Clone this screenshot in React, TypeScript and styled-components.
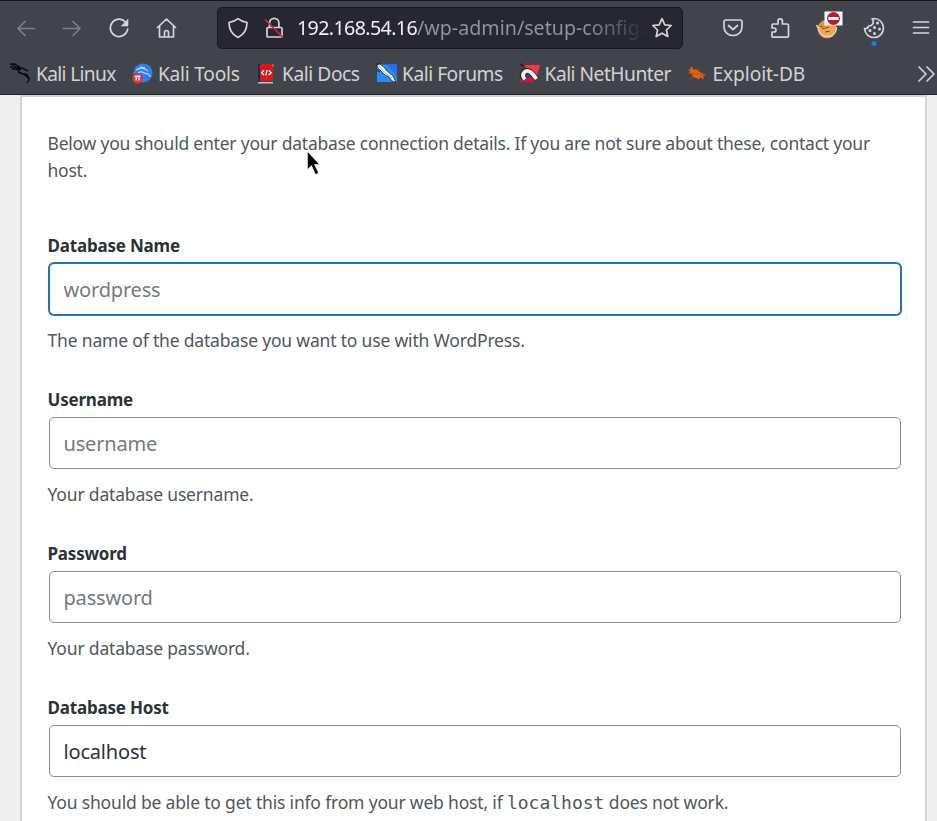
import React from 'react';
import styled, { createGlobalStyle } from 'styled-components';

const GlobalStyle = createGlobalStyle`
  * { box-sizing: border-box; }
  html, body { margin: 0; padding: 0; overflow: hidden; }
  body { background: #efefef; font-family: "Noto Sans", "Open Sans", sans-serif; }
`;

const Window = styled.div`
  position: relative;
  display: flex;
  flex-direction: column;
  width: 937px;
  height: 821px;
  overflow: hidden;
  background: #efefef;
`;

const Chrome = styled.header`
  flex: none;
  height: 95px;
  background: #42444c;
  border-top: 1px solid #15171c;
  border-bottom: 1px solid #24252b;
`;

const NavBar = styled.div`
  display: flex;
  align-items: center;
  height: 53px;
`;

const NavGroup = styled.div`
  display: flex;
  align-items: center;
  width: 217px;
  padding-left: 13.5px;
  gap: 22.7px;
`;

const IconButton = styled.button<{ $dim?: boolean }>`
  display: flex;
  flex: none;
  width: 24px;
  height: 24px;
  padding: 0;
  border: 0;
  background: none;
  color: ${(p) => (p.$dim ? '#7f8086' : '#d6d6d9')};
`;

const AddressBar = styled.div`
  display: flex;
  align-items: center;
  width: 466px;
  height: 42px;
  padding: 0 8px;
  color: #d6d6d9;
  background: #262732;
  border: 1px solid #17181d;
  border-radius: 5px;
`;

const Url = styled.div`
  flex: none;
  width: 348px;
  margin: 1px -7px 0 11px;
  white-space: nowrap;
  font-size: 19.6px;
  line-height: 30px;
  letter-spacing: 0.03px;
  color: #92939a;
  mask-image: linear-gradient(to right, #000 290px, transparent 350px);
`;

const Host = styled.span`
  color: #f0f0f2;
  letter-spacing: -0.6px;
`;

const LockSlot = styled.div`
  display: flex;
  margin-left: 12px;
`;

const StarSlot = styled.div`
  display: flex;
  margin-left: auto;
`;

const Extensions = styled.div`
  display: flex;
  align-items: center;
  margin-left: 37.5px;
  gap: 23px;
`;

const Bookmarks = styled.nav`
  display: flex;
  align-items: center;
  height: 39px;
  padding-left: 10px;
`;

const Bookmark = styled.a<{ $width: number; $spacing: number }>`
  display: flex;
  align-items: center;
  flex: none;
  gap: 5px;
  width: ${(p) => p.$width}px;
  font-size: 19.2px;
  line-height: 26px;
  letter-spacing: ${(p) => p.$spacing}px;
  color: #d2d2d5;
  white-space: nowrap;
`;

const Overflow = styled.div`
  display: flex;
  margin-left: auto;
`;

const Card = styled.main`
  flex: none;
  width: 907px;
  height: 780px;
  margin: 0 0 0 20px;
  padding: 33px 24px 0 25.5px;
  background: #fff;
  border: solid #d2d3d4;
  border-width: 2px 2px 0;
`;

const Intro = styled.p`
  margin: 0 0 50px;
  color: #50575e;
  font-size: 17.5px;
  line-height: 27px;
  letter-spacing: -0.22px;
  white-space: pre-line;
`;

const Field = styled.div`
  display: flex;
  flex-direction: column;
  height: 154px;
`;

const Label = styled.label`
  color: #2c3338;
  font-weight: 700;
  font-size: 17px;
  line-height: 24px;
  letter-spacing: -0.2px;
`;

const TextInput = styled.input<{ $active?: boolean }>`
  width: 852px;
  height: 52px;
  margin: 5px 0 12px 1px;
  padding: 0 14px;
  color: #2c3338;
  font: 20px/30px "Noto Sans", sans-serif;
  letter-spacing: -0.18px;
  background: #fff;
  border: 1px solid ${(p) => (p.$active ? '#2271b1' : '#8c8f94')};
  border-radius: 5px;
  box-shadow: ${(p) => (p.$active ? '0 0 0 1px #2271b1' : 'none')};
  outline: none;
  &::placeholder { color: #757a80; opacity: 1; }
`;

const Help = styled.p`
  margin: 0;
  color: #50575e;
  font-size: 17.5px;
  line-height: 27px;
  letter-spacing: -0.18px;
`;

const Code = styled.code`
  font-family: "DejaVu Sans Mono", monospace;
  font-size: 18px;
  line-height: 1;
  letter-spacing: 0;
`;

const Pointer = styled.svg`
  position: absolute;
  left: 306px;
  top: 149px;
`;

const line = { fill: 'none', stroke: 'currentColor', strokeWidth: 1.7, strokeLinecap: 'round', strokeLinejoin: 'round' } as const;

const Icon = ({ children }: { children: React.ReactNode }) => (
  <svg width="24" height="24" viewBox="0 0 24 24" {...line}>{children}</svg>
);

const Favicon = ({ children }: { children: React.ReactNode }) => (
  <svg width="21" height="21" viewBox="0 0 21 21">{children}</svg>
);

const KaliIcon = () => (
  <Favicon>
    <path d="M0 1l4 1-1-2 5 3 3 2M0 4l5 0 6 1M2 6l5 0 4 0M11 5c-5 1-3 6 2 6s5 2 6 5M11 5l4 1 3 2-3-1M9 9c4 3 9 2 10 8l-2 3M16 13l4 3M5 6l5 1" fill="none" stroke="#08090b" strokeWidth="1.3" />
  </Favicon>
);

const ToolsIcon = () => (
  <Favicon>
    <circle cx="11" cy="10" r="9.5" fill="#2b7fee" />
    <path d="M4 7q4-3 9-1l3 2M6 10c4-3 5 0 8 .500s4 1 4 3.500M8 4l5 1" fill="none" stroke="#a9d0fb" strokeWidth="1.4" />
    <circle cx="5.5" cy="15.2" r="5.3" fill="#ed2f35" />
    <path d="M2.700 13.300h5.600M4.200 13v4.500M7 13v4.500" stroke="#fff" strokeWidth="1.4" />
  </Favicon>
);

const DocsIcon = () => (
  <Favicon>
    <path d="M3 1h14v17H3z" fill="#d9161c" />
    <path d="M2 1h2v18H2z" fill="#20264d" />
    <path d="M16 1h2v3h-2z" fill="#b65a2c" />
    <path d="M2 19h15v1.500H2z" fill="#c8bfc0" />
    <path d="M8 7.500l-2.500 2.300L8 12M12.700 7.500l2.500 2.300-2.500 2.200M11 7l-1.300 5.500" fill="none" stroke="#fff" strokeWidth="1.3" />
  </Favicon>
);

const ForumsIcon = () => (
  <Favicon>
    <path d="M1 1.500h20V19H1z" fill="#238dfb" />
    <path d="M11 1.500h10V14z" fill="#2b6cf4" />
    <path d="M0 1l4 0 5 4 1 2 7 6 3 6-4-1-3-4-4-2-5-5-2-2z" fill="#f4f5f6" stroke="#252831" strokeWidth=".8" />
    <path d="M3 3l6 7 7 5" fill="none" stroke="#8a8d94" strokeWidth=".6" />
    <path d="M0 3l4-3M1 7l3 2" stroke="#23252c" strokeWidth="1.2" />
  </Favicon>
);

const NetHunterIcon = () => (
  <Favicon>
    <path d="M5 2h16l-4 14-6-7z" fill="#ff3439" />
    <path d="M5.500 17C0 10 7 5.500 11.500 9q3 2.500 6 7" fill="none" stroke="#26262e" strokeWidth="5.500" />
    <path d="M6 16.500C1 10.500 7 6 11.500 9q3 2.500 6 7" fill="none" stroke="#f7f4f5" strokeWidth="3.800" />
    <path d="M9 13l5 2.500 1 4H7l-2-2 4-2zM1 15l4 4.500H1z" fill="#d0123c" />
    <path d="M1 1l4 2" stroke="#222" strokeWidth="1.500" />
  </Favicon>
);

const ExploitIcon = () => (
  <Favicon>
    <path d="M0 6l3 1 1-4 3 4 2-1 4 3 1 1 5 1.500-3 1 1 4-4-2.500 0 2-4-1-4-1.500 1-1.500-4-2 1-1.500z" fill="#ea5f10" />
    <path d="M0 9l18 3.500M5 14l-2 3M12 7l1-2M10 15l1 3" stroke="#a9521f" strokeWidth=".7" />
  </Favicon>
);

const bookmarks = [
  { name: 'Kali Linux', icon: <KaliIcon />, width: 122, spacing: -0.67 },
  { name: 'Kali Tools', icon: <ToolsIcon />, width: 124, spacing: -0.26 },
  { name: 'Kali Docs', icon: <DocsIcon />, width: 120, spacing: -0.44 },
  { name: 'Kali Forums', icon: <ForumsIcon />, width: 142.5, spacing: -0.48 },
  { name: 'Kali NetHunter', icon: <NetHunterIcon />, width: 168, spacing: -0.5 },
  { name: 'Exploit-DB', icon: <ExploitIcon />, width: 130, spacing: -0.1 },
];

const fields = [
  { label: 'Database Name', placeholder: 'wordpress', help: 'The name of the database you want to use with WordPress.', active: true },
  { label: 'Username', placeholder: 'username', help: 'Your database username.' },
  { label: 'Password', placeholder: 'password', help: 'Your database password.' },
  { label: 'Database Host', value: 'localhost', help: <>You should be able to get this info from your web host, if <Code>localhost</Code> does not work.</> },
];

export default function App() {
  return (
    <>
      <GlobalStyle />
      <Window>
        <Chrome>
          <NavBar>
            <NavGroup>
              <IconButton $dim aria-label="Back"><Icon><path d="M20.5 12.500H4M11 5.500l-7 7 7 7" /></Icon></IconButton>
              <IconButton $dim aria-label="Forward"><Icon><path d="M3.500 12.500H20M13 5.500l7 7-7 7" /></Icon></IconButton>
              <IconButton aria-label="Reload"><Icon><path d="M18.500 6A8.700 8.700 0 1 0 20.700 13" /><path d="M21 3.500v6.500h-6.500z" fill="currentColor" strokeWidth=".6" /></Icon></IconButton>
              <IconButton aria-label="Home"><Icon><path d="M3.500 11.500l9-8.500 9 8.500M5.500 10v11h14V10M10.500 21v-4.500q0-2 2-2t2 2V21" /></Icon></IconButton>
            </NavGroup>
            <AddressBar>
              <Icon><path d="M12 2.700q3.500 3 9 3.800C21 14 18 18.500 12 21.500 6 18.500 3 14 3 6.500q5.500-.8 9-3.800z" /></Icon>
              <LockSlot>
                <Icon><path d="M7.500 11V7a4.700 4.700 0 0 1 9.400 0v4M6 11.500h13q1 0 1 1V20q0 1-1 1H6q-1 0-1-1v-7.500q0-1 1-1z" /><path d="M3.500 4l17 17" stroke="#d9234d" /></Icon>
              </LockSlot>
              <Url><Host>192.168.54.16</Host>/wp-admin/setup-config.</Url>
              <StarSlot>
                <Icon><path d="M12 2.700l2.800 6.100 6.400.7-4.800 4.500 1.400 6.500-5.800-3.300-5.800 3.300L7.600 14 2.800 9.500l6.400-.7z" /></Icon>
              </StarSlot>
            </AddressBar>
            <Extensions>
              <IconButton aria-label="Pocket"><Icon><path d="M5 4h14q2 0 2 2v5a9 8.500 0 0 1-18 0V6q0-2 2-2zM7.500 9.500l4.500 4 4.500-4" /></Icon></IconButton>
              <IconButton aria-label="Extensions"><Icon><path d="M5 8h5V5a2.200 2.200 0 0 1 4.400 0v3H19q1.500 0 1.500 1.500V20q0 1.200-1.200 1.200H5q-1 0-1-1V16h2a2 2 0 0 0 0-4H4V9q0-1 1-1z" /></Icon></IconButton>
              <IconButton aria-label="Proxy">
                <svg width="28" height="30" viewBox="0 0 28 30" overflow="visible">
                  <circle cx="12" cy="13" r="9" fill="#ec9231" stroke="#c9a27b" />
                  <path d="M2 9l5 3 7-2 7 1-1 5-4 4-6 1z" fill="#f3a64c" />
                  <path d="M1.500 9l4 8 4 3.500 7-.5 4-4 1-5" fill="none" stroke="#e2d3c2" strokeWidth="1.4" />
                  <path d="M7 13l7-2M10 16l5-1M5 10l3 1" fill="none" stroke="#785330" />
                  <path d="M9.500-4.500h18V9.500h-18z" fill="#fff" />
                  <circle cx="18.500" cy="2.500" r="6.500" fill="#bf1838" />
                  <path d="M13.500 2.500h10" stroke="#fff" strokeWidth="3" />
                </svg>
              </IconButton>
              <IconButton aria-label="Cookies">
                <svg width="24" height="32" viewBox="0 0 24 32" {...line} overflow="visible">
                  <path d="M12 2.500a9.500 9.500 0 1 1-9.500 10q3.500.5 4-2.500 3.500 0 4.500-2.500 1-2.500-1-4.500 1-.5 2-.5z" />
                  <g fill="currentColor" stroke="none"><circle cx="15.500" cy="7" r="1.500" /><circle cx="12.500" cy="11.500" r="1.500" /><circle cx="8" cy="14.500" r="1.500" /><circle cx="12.500" cy="17.500" r="1.500" /><circle cx="17.500" cy="13" r="1.500" /></g>
                  <circle cx="12" cy="27.500" r="2.500" fill="#1b78ff" stroke="none" />
                </svg>
              </IconButton>
              <IconButton aria-label="Menu"><Icon><path d="M4.500 6h15M4.500 11.500h15M4.500 17h15" /></Icon></IconButton>
            </Extensions>
          </NavBar>
          <Bookmarks>
            {bookmarks.map((b) => (
              <Bookmark key={b.name} $width={b.width} $spacing={b.spacing}>{b.icon}{b.name}</Bookmark>
            ))}
            <Overflow><svg width="22" height="22" viewBox="0 0 22 22" {...line} color="#d2d2d5"><path d="M4 4l7 7-7 7M12 4l7 7-7 7" /></svg></Overflow>
          </Bookmarks>
        </Chrome>
        <Card>
          <Intro>{'Below you should enter your database connection details. If you are not sure about these, contact your\nhost.'}</Intro>
          {fields.map((f) => (
            <Field key={f.label}>
              <Label>{f.label}</Label>
              <TextInput $active={f.active} placeholder={f.placeholder} defaultValue={f.value} />
              <Help>{f.help}</Help>
            </Field>
          ))}
        </Card>
        <Pointer width="16" height="28" viewBox="0 0 16 28">
          <path d="M1.500 2.500v18l4-4 4 9 3-1.500-4-8.500h5z" fill="#050505" stroke="#fff" strokeWidth=".5" />
        </Pointer>
      </Window>
    </>
  );
}
